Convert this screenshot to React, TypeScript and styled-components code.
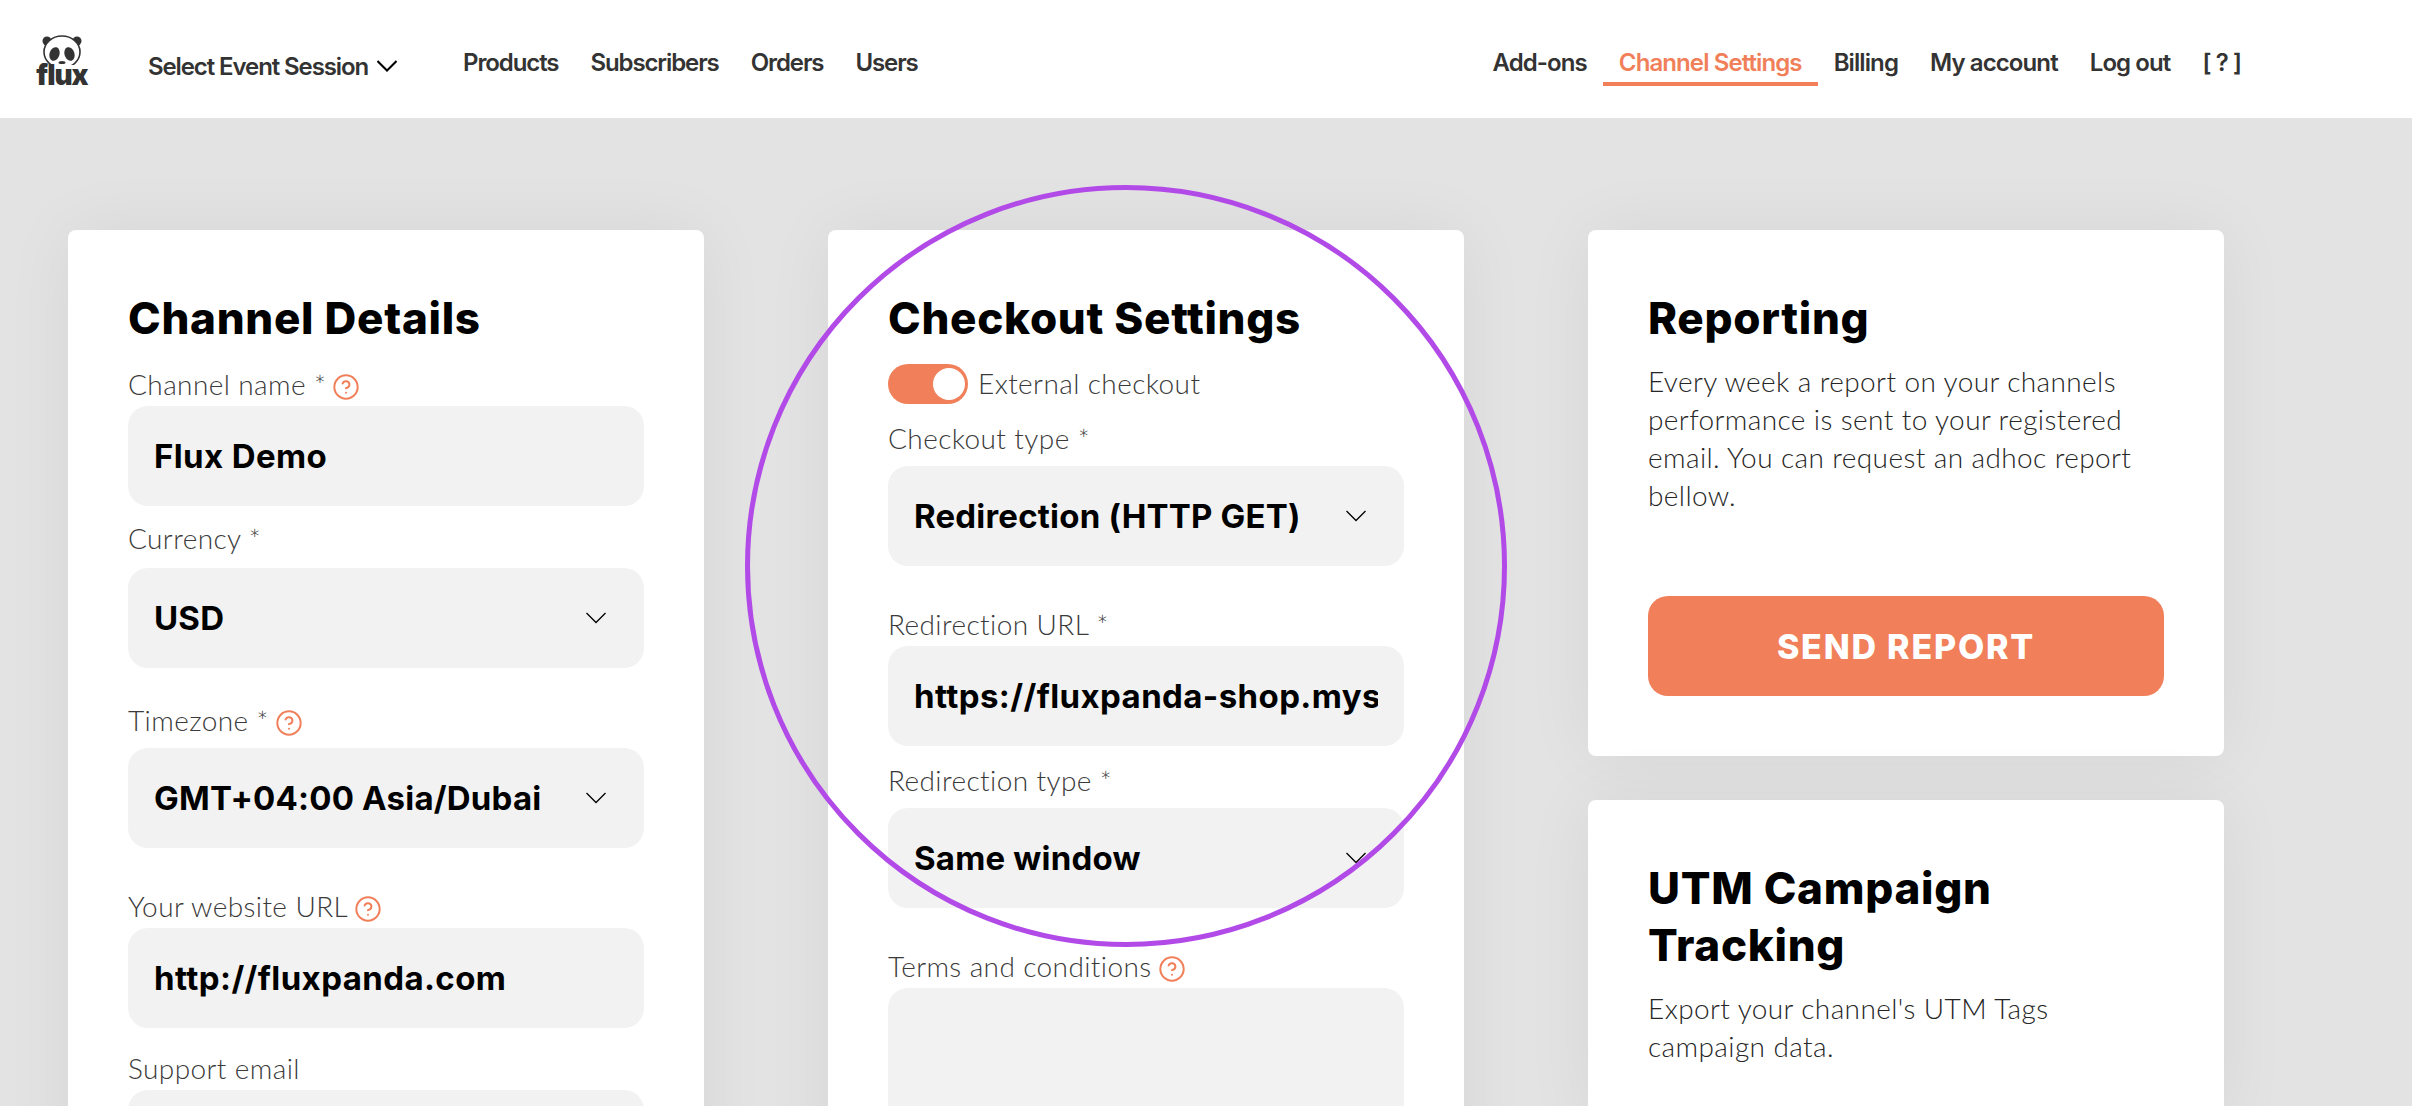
import styled, { createGlobalStyle } from 'styled-components';
import { CircleHelp } from 'lucide-react';

const Global = createGlobalStyle`
  html, body {
    margin: 0;
    height: 1106px;
    overflow: hidden;
    background: #e3e3e3;
    font-family: "Lato", "Liberation Sans", sans-serif;
  }
  * { box-sizing: border-box; }
`;

const Header = styled.header`
  height: 118px;
  background: #fff;
  display: flex;
  align-items: center;
  padding: 0 155px 0 36px;
  font-family: "Inter", sans-serif;
  font-weight: 600;
  font-size: 24px;
  letter-spacing: -1.1px;
  color: #333;
`;
const Logo = styled.div`
  width: 52px;
  height: 52px;
  margin-top: 4px;
  display: flex;
  flex-direction: column;
  align-items: center;
  color: #333;
`;
const LogoText = styled.span`
  font-family: "Inter", sans-serif;
  font-weight: 900;
  font-size: 28px;
  line-height: 21px;
  letter-spacing: -1px;
`;
const EventSelect = styled.div`
  display: flex;
  align-items: center;
  gap: 9px;
  margin: 14px 0 0 60px;
  width: 299px;
  svg { color: #000; }
`;
const Nav = styled.nav`
  display: flex;
  align-items: center;
  margin-top: 4px;
`;
const RightNav = styled(Nav)`
  margin-left: auto;
  letter-spacing: -0.9px;
`;
const NavItem = styled.a<{ $active?: boolean }>`
  padding: 0 16px;
  height: 50px;
  line-height: 53px;
  color: ${p => (p.$active ? '#f07f5a' : '#333')};
  border-bottom: 4px solid ${p => (p.$active ? '#f07f5a' : 'transparent')};
`;

const Columns = styled.main`
  display: grid;
  grid-template-columns: repeat(3, 636px);
  column-gap: 124px;
  align-items: start;
  padding: 112px 0 0 68px;
`;
const Stack = styled.div`
  display: flex;
  flex-direction: column;
  gap: 44px;
`;
const Card = styled.section`
  background: #fff;
  border-radius: 8px;
  padding: 60px;
  box-shadow: 0 0 70px rgba(0, 0, 0, 0.06);
`;
const Title = styled.h2<{ $after?: number }>`
  margin: 0 0 ${p => p.$after ?? 17}px;
  font-family: "Inter", sans-serif;
  font-weight: 800;
  font-size: 44px;
  line-height: 57px;
  letter-spacing: 0.7px;
  color: #000;
`;
const Label = styled.label`
  display: flex;
  align-items: center;
  gap: 6px;
  height: 34px;
  padding-bottom: 3px;
  font-size: 28px;
  font-weight: 300;
  letter-spacing: 0.4px;
  color: #3a3a3a;
  white-space: nowrap;
`;
const Field = styled.div<{ $gap: number; $after: number }>`
  display: flex;
  flex-direction: column;
  gap: ${p => p.$gap}px;
  margin-bottom: ${p => p.$after}px;
`;
const TextInput = styled.input`
  display: block;
  width: 100%;
  height: 100px;
  border: 0;
  outline: 0;
  border-radius: 20px;
  padding: 0 26px;
  background: #f2f2f2;
  font-family: "Inter", sans-serif;
  font-weight: 700;
  font-size: 33px;
  letter-spacing: 0.4px;
  color: #000;
`;
const SelectBox = styled.div`
  height: 100px;
  border-radius: 20px;
  padding: 0 38px 0 26px;
  background: #f2f2f2;
  display: flex;
  align-items: center;
  justify-content: space-between;
  font-family: "Inter", sans-serif;
  font-weight: 700;
  font-size: 33px;
  letter-spacing: 0.2px;
  color: #000;
`;
const TextArea = styled.div`
  height: 240px;
  border-radius: 20px;
  background: #f2f2f2;
`;
const ToggleRow = styled.div`
  display: flex;
  align-items: center;
  gap: 10px;
  height: 40px;
  margin-bottom: 18px;
  font-size: 28px;
  font-weight: 300;
  letter-spacing: 0.4px;
  color: #3a3a3a;
`;
const ToggleText = styled.span`
  padding-bottom: 3px;
`;
const Toggle = styled.span`
  width: 80px;
  height: 40px;
  border-radius: 20px;
  background: #f07f5a;
  display: flex;
  align-items: center;
  justify-content: flex-end;
  padding-right: 3px;
`;
const Knob = styled.span`
  width: 32px;
  height: 32px;
  border-radius: 50%;
  background: #fff;
`;
const Help = styled(CircleHelp).attrs({ size: 28, strokeWidth: 1.7 })`
  color: #f07f5a;
  margin-top: 7px;
  flex: none;
`;
const Body = styled.p`
  margin: -2px 0 0;
  font-size: 28px;
  line-height: 38px;
  font-weight: 300;
  letter-spacing: 0.4px;
  color: #262626;
`;
const SendButton = styled.button`
  display: block;
  width: 100%;
  height: 100px;
  margin-top: 82px;
  border: 0;
  border-radius: 20px;
  background: #f07f5a;
  color: #fff;
  font-family: "Inter", sans-serif;
  font-weight: 800;
  font-size: 34px;
  letter-spacing: 1.8px;
`;
const FocusRing = styled.div`
  position: absolute;
  left: 745px;
  top: 185px;
  width: 762px;
  height: 762px;
  border: 5px solid #b24ae8;
  border-radius: 50%;
  pointer-events: none;
`;

function Chevron({ w = 20, h = 10, sw = 1.3 }: { w?: number; h?: number; sw?: number }) {
  return (
    <svg width={w} height={h + 2} viewBox={`0 0 ${w} ${h + 2}`} fill="none" stroke="currentColor" strokeWidth={sw}>
      <path d={`M0.5 1 L${w / 2} ${h + 0.5} L${w - 0.5} 1`} />
    </svg>
  );
}

function PandaMark() {
  return (
    <svg width="42" height="30" viewBox="0 0 42 30" fill="none">
      <circle cx="6" cy="6" r="4.5" fill="currentColor" />
      <circle cx="36" cy="6" r="4.5" fill="currentColor" />
      <ellipse cx="21" cy="17" rx="18" ry="16" fill="#fff" stroke="currentColor" strokeWidth="1.6" />
      <ellipse cx="13.5" cy="19" rx="5" ry="7" transform="rotate(18 13.5 19)" fill="currentColor" />
      <ellipse cx="28.5" cy="19" rx="5" ry="7" transform="rotate(-18 28.5 19)" fill="currentColor" />
      <ellipse cx="21" cy="27.5" rx="3.5" ry="1.6" fill="currentColor" />
    </svg>
  );
}

export default function App() {
  return (
    <>
      <Global />
      <Header>
        <Logo>
          <PandaMark />
          <LogoText>flux</LogoText>
        </Logo>
        <EventSelect>
          Select Event Session <Chevron sw={2} />
        </EventSelect>
        <Nav>
          <NavItem>Products</NavItem>
          <NavItem>Subscribers</NavItem>
          <NavItem>Orders</NavItem>
          <NavItem>Users</NavItem>
        </Nav>
        <RightNav>
          <NavItem>Add-ons</NavItem>
          <NavItem $active>Channel Settings</NavItem>
          <NavItem>Billing</NavItem>
          <NavItem>My account</NavItem>
          <NavItem>Log out</NavItem>
          <NavItem>[ ? ]</NavItem>
        </RightNav>
      </Header>
      <Columns>
        <Card>
          <Title $after={21}>Channel Details</Title>
          <Field $gap={4} $after={16}>
            <Label>Channel name * <Help /></Label>
            <TextInput readOnly value="Flux Demo" />
          </Field>
          <Field $gap={12} $after={36}>
            <Label>Currency *</Label>
            <SelectBox>USD <Chevron /></SelectBox>
          </Field>
          <Field $gap={10} $after={42}>
            <Label>Timezone * <Help /></Label>
            <SelectBox>GMT+04:00 Asia/Dubai <Chevron /></SelectBox>
          </Field>
          <Field $gap={4} $after={24}>
            <Label>Your website URL <Help /></Label>
            <TextInput readOnly value="http://fluxpanda.com" />
          </Field>
          <Field $gap={4} $after={18}>
            <Label>Support email</Label>
            <TextInput readOnly value="" />
          </Field>
        </Card>
        <Card>
          <Title>Checkout Settings</Title>
          <ToggleRow>
            <Toggle><Knob /></Toggle>
            <ToggleText>External checkout</ToggleText>
          </ToggleRow>
          <Field $gap={10} $after={42}>
            <Label>Checkout type *</Label>
            <SelectBox>Redirection (HTTP GET) <Chevron /></SelectBox>
          </Field>
          <Field $gap={4} $after={18}>
            <Label>Redirection URL *</Label>
            <TextInput readOnly value="https://fluxpanda-shop.myshopify.com" />
          </Field>
          <Field $gap={10} $after={42}>
            <Label>Redirection type *</Label>
            <SelectBox>Same window <Chevron /></SelectBox>
          </Field>
          <Field $gap={4} $after={18}>
            <Label>Terms and conditions <Help /></Label>
            <TextArea />
          </Field>
        </Card>
        <Stack>
          <Card>
            <Title>Reporting</Title>
            <Body>Every week a report on your channels performance is sent to your registered email. You can request an adhoc report bellow.</Body>
            <SendButton>SEND REPORT</SendButton>
          </Card>
          <Card>
            <Title>UTM Campaign Tracking</Title>
            <Body>Export your channel's UTM Tags campaign data.</Body>
          </Card>
        </Stack>
      </Columns>
      <FocusRing />
    </>
  );
}
